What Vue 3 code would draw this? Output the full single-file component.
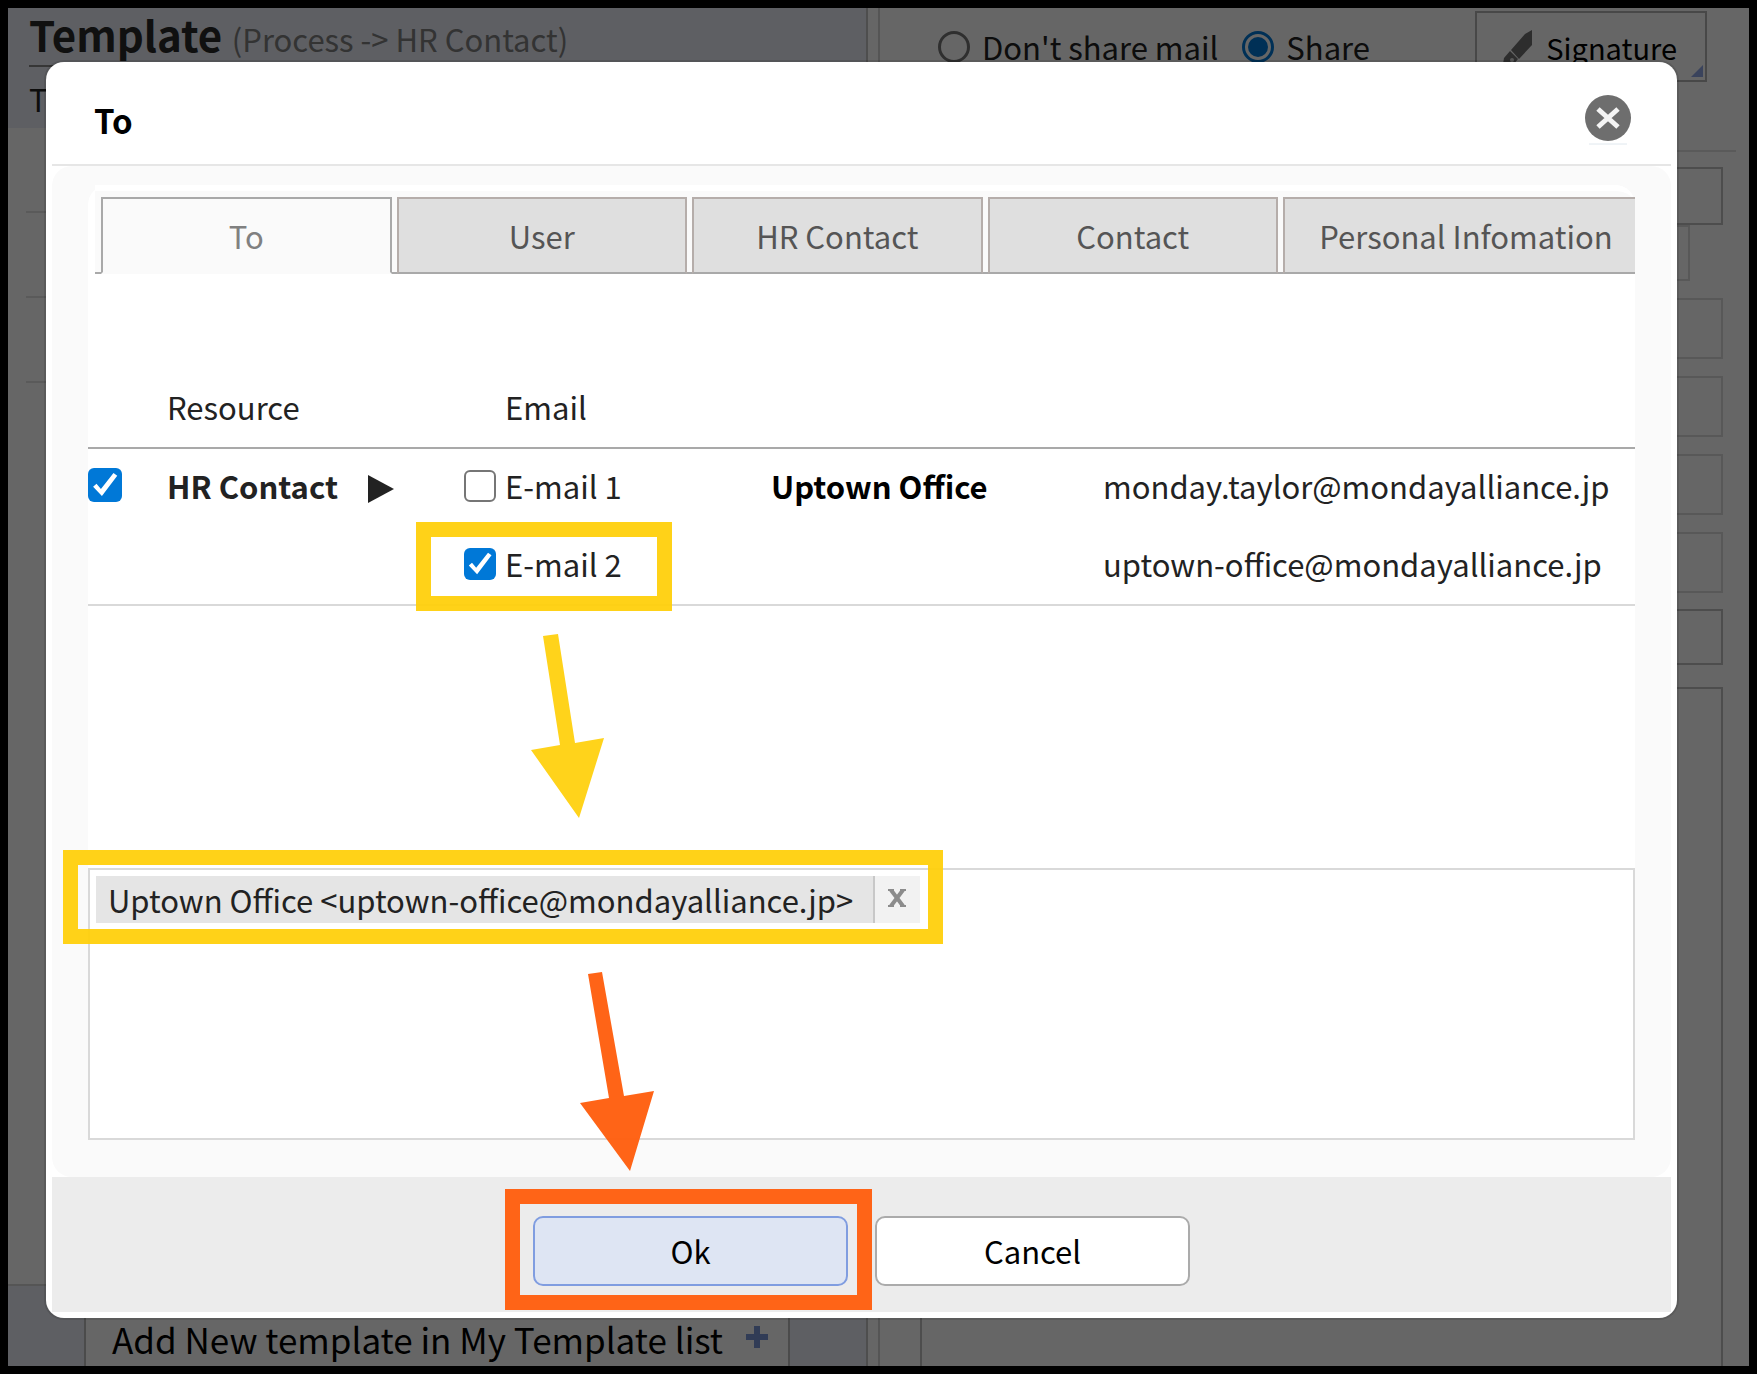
<script setup>
import { ref } from 'vue'

const tabs = ['To', 'User', 'HR Contact', 'Contact', 'Personal Infomation']
const activeTab = ref('To')
const shareMode = ref('share')
const resourceOn = ref(true)
const rows = ref([
  { id: 'email-1', label: 'E-mail 1', address: 'monday.taylor@mondayalliance.jp', checked: false },
  { id: 'email-2', label: 'E-mail 2', address: 'uptown-office@mondayalliance.jp', checked: true },
])
const recipients = ['Uptown Office <uptown-office@mondayalliance.jp>']
const lightFields = ['Cc', 'Bcc', 'Reply', 'From']
</script>

<template>
  <div class="app">
    <div class="page">
      <section class="left">
        <header class="left-head">
          <h1 class="left-title">Template <small>(Process -&gt; HR Contact)</small></h1>
          <p class="left-sub">T</p>
        </header>
        <ul class="left-list">
          <li></li>
          <li></li>
          <li></li>
        </ul>
        <footer class="left-foot">
          <button type="button" class="add">
            Add New template in My Template list
            <svg class="plus" viewBox="0 0 22 22" aria-hidden="true"><path d="M8 0h6v8h8v6h-8v8H8v-8H0V8h8z" /></svg>
          </button>
        </footer>
      </section>
      <section class="right">
        <div class="share-row">
          <label class="share"><input v-model="shareMode" type="radio" name="share" value="none" />Don't share mail</label>
          <label class="share"><input v-model="shareMode" type="radio" name="share" value="share" />Share</label>
          <button type="button" class="signature">
            <svg class="pen" viewBox="0 0 30 34" aria-hidden="true">
              <path d="M29 0v15L16 29l-8-9L22 4z" />
              <path d="M7 21l8 8-4 5H0l1-6z" />
              <circle cx="9" cy="30" r="2" class="nib" />
            </svg>
            Signature
            <svg class="corner" viewBox="0 0 12 12" aria-hidden="true"><path d="M12 0v12H0z" /></svg>
          </button>
        </div>
        <form class="mail-form">
          <input class="field subject" type="text" aria-label="Subject" />
          <input class="field short" type="text" aria-label="Name" />
          <input v-for="f in lightFields" :key="f" class="field light" type="text" :aria-label="f" />
          <input class="field attach" type="text" aria-label="Attachment" />
          <textarea class="field message" aria-label="Message"></textarea>
        </form>
      </section>
    </div>

    <div class="backdrop">
      <div class="dialog" role="dialog" aria-labelledby="dialog-title">
        <header class="dialog-head">
          <h2 id="dialog-title">To</h2>
          <button type="button" class="close" aria-label="Close">
            <svg viewBox="0 0 46 50" aria-hidden="true">
              <circle cx="23" cy="23" r="23" fill="#6e6e6e" />
              <path d="M13 14l20 18M33 14L13 32" stroke="#f4f4f4" stroke-width="5" />
              <path d="M4 49h38" stroke="#e0e8ee" stroke-width="1" />
            </svg>
          </button>
        </header>

        <div class="dialog-body">
          <div class="panel">
            <nav class="tabs" role="tablist">
              <button
                v-for="t in tabs"
                :key="t"
                type="button"
                role="tab"
                class="tab"
                :class="{ active: t === activeTab }"
                :aria-selected="t === activeTab"
                @click="activeTab = t"
              >{{ t }}</button>
            </nav>
            <table class="resources">
              <colgroup>
                <col class="c-check" />
                <col class="c-resource" />
                <col class="c-email" />
                <col class="c-name" />
                <col />
              </colgroup>
              <thead>
                <tr>
                  <th></th>
                  <th>Resource</th>
                  <th class="email-head">Email</th>
                  <th></th>
                  <th></th>
                </tr>
              </thead>
              <tbody>
                <tr v-for="(row, i) in rows" :key="row.id">
                  <td>
                    <input v-if="i === 0" id="hr" v-model="resourceOn" type="checkbox" class="box large" />
                  </td>
                  <td>
                    <label v-if="i === 0" for="hr" class="resource">
                      HR Contact
                      <svg viewBox="0 0 26 34" aria-hidden="true"><path d="M0 6l26 14L0 34z" /></svg>
                    </label>
                  </td>
                  <td>
                    <label class="email">
                      <input v-model="row.checked" type="checkbox" class="box" />{{ row.label }}
                      <span v-if="row.checked" class="mark mark-email"></span>
                    </label>
                  </td>
                  <td class="owner"><template v-if="i === 0">Uptown Office</template></td>
                  <td>{{ row.address }}</td>
                </tr>
              </tbody>
            </table>
            <svg class="arrow arrow-yellow" viewBox="0 0 74 184" aria-hidden="true">
              <path d="M12 2L27 0 44 109 73 104 48 184 0 116 29 111z" />
            </svg>
          </div>

          <div class="selected">
            <div v-for="r in recipients" :key="r" class="chip">
              <span class="chip-text">{{ r }}</span>
              <button type="button" class="chip-x" :aria-label="'Remove ' + r">
                <svg viewBox="0 0 18 18" aria-hidden="true"><path d="M3 1l12 16M15 1L3 17" /><path class="serif" d="M0 1h6M12 1h6M0 17h6M12 17h6" /></svg>
              </button>
              <span class="mark mark-chip"></span>
            </div>
            <svg class="arrow arrow-orange" viewBox="0 0 74 199" aria-hidden="true">
              <path d="M8 2L22 0 44 124 74 119 50 199 0 131 29 126z" />
            </svg>
          </div>
        </div>

        <footer class="dialog-foot">
          <div class="ok-wrap">
            <button type="button" class="btn primary">Ok</button>
            <span class="mark mark-ok"></span>
          </div>
          <button type="button" class="btn">Cancel</button>
        </footer>
      </div>
    </div>
  </div>
</template>

<style>
body {
  margin: 0;
}
</style>

<style scoped>
.app,
.app * {
  box-sizing: border-box;
}
.app {
  position: relative;
  display: flex;
  min-height: 100vh;
  border: 8px solid #000;
  background: #fff;
  color: #222;
  font-family: "Noto Sans CJK JP", "Noto Sans", sans-serif;
  font-size: 31px;
  line-height: 48px;
}
button,
input,
textarea {
  margin: 0;
  padding: 0;
  font: inherit;
  color: #000;
}
h1,
h2,
p,
ul {
  margin: 0;
  padding: 0;
}

/* page behind the dialog */
.page {
  flex: 1;
  display: grid;
  grid-template-columns: 860fr 871fr;
  column-gap: 10px;
}
.left {
  display: flex;
  flex-direction: column;
  border-right: 2px solid #c4c4c4;
}
.left-head {
  height: 120px;
  padding-left: 21px;
  background: #ebeef7;
}
.left-title {
  height: 59px;
  border-bottom: 2px solid #888;
  font-size: 42px;
  line-height: 52px;
  color: #2a2a2a;
}
.left-title small {
  font-size: 31px;
  font-weight: 400;
  color: #808080;
}
.left-sub {
  padding-top: 8px;
}
.left-list {
  flex: 1;
  padding-left: 18px;
  list-style: none;
}
.left-list li {
  height: 85px;
  border-bottom: 2px solid #e2e2e2;
}
.left-foot {
  display: flex;
  height: 82px;
  padding: 0 76px;
  border-top: 2px solid #d5d5d5;
  background: #ebeef7;
}
.add {
  flex: 1;
  display: flex;
  align-items: center;
  gap: 23px;
  padding: 26px 0 0 26px;
  border: solid #bbb;
  border-width: 0 2px;
  background: #fff;
  font-size: 35px;
  white-space: nowrap;
}
.plus {
  width: 22px;
  height: 22px;
  margin-bottom: 4px;
  fill: #7c96d6;
}
.right {
  display: flex;
  flex-direction: column;
  border-left: 2px solid #d5d5d5;
}
.share-row {
  display: flex;
  align-items: center;
  gap: 24px;
  padding: 3px 42px 0 58px;
}
.share {
  display: flex;
  align-items: center;
  gap: 12px;
}
.share input {
  appearance: none;
  width: 32px;
  height: 32px;
  border: 3px solid #767676;
  border-radius: 50%;
  background: #fff;
}
.share input:checked {
  padding: 3px;
  border-color: #0078d7;
}
.share input:checked::before {
  content: "";
  display: block;
  height: 100%;
  border-radius: 50%;
  background: #0078d7;
}
.signature {
  position: relative;
  display: flex;
  align-items: center;
  gap: 13px;
  height: 71px;
  margin-left: auto;
  padding: 0 28px 0 26px;
  border: 2px solid #b4b4b4;
  background: #fff;
  font-size: 29px;
}
.pen {
  width: 30px;
  height: 34px;
  fill: #707070;
}
.nib {
  fill: #ddd;
}
.corner {
  position: absolute;
  right: 2px;
  bottom: 3px;
  width: 12px;
  height: 12px;
  fill: #91a8e6;
}
.mail-form {
  flex: 1;
  display: flex;
  flex-direction: column;
  margin: 68px 13px 0;
  padding: 15px 13px 0 27px;
  border-top: 2px solid #e2e2e2;
}
.field {
  display: block;
  width: 100%;
  border: 2px solid #c0c0c0;
  background: #fff;
}
.subject {
  height: 58px;
}
.short {
  width: calc(100% - 33px);
  height: 56px;
  border-color: #ddd;
}
.light {
  height: 61px;
  margin-top: 17px;
  border-color: #ddd;
}
.attach {
  height: 56px;
  margin-top: 16px;
}
.message {
  flex: 1;
  margin-top: 22px;
  border-bottom: 0;
  resize: none;
}

/* dialog */
.backdrop {
  position: absolute;
  inset: 0;
  display: flex;
  padding: 54px 72px 48px 38px;
  background: rgba(0, 0, 0, 0.6);
}
.dialog {
  flex: 1;
  display: flex;
  flex-direction: column;
  padding: 0 6px 6px;
  border-radius: 18px;
  background: #fff;
  box-shadow: 0 0 0 2px rgba(0, 0, 0, 0.1);
}
.dialog-head {
  display: flex;
  align-items: center;
  justify-content: space-between;
  height: 104px;
  padding: 14px 40px 0 42px;
  border-bottom: 2px solid #e6e6e6;
}
.dialog-head h2 {
  font-size: 33px;
  color: #000;
}
.close {
  width: 46px;
  height: 50px;
  border: 0;
  background: none;
}
.close svg {
  display: block;
}
.dialog-body {
  flex: 1;
  display: flex;
  flex-direction: column;
  padding: 19px 36px 37px;
  border-radius: 20px;
  background: #fafafa;
}
.panel {
  position: relative;
  flex: 1;
  border-radius: 20px 20px 0 0;
  background: #fff;
}
.tabs {
  display: grid;
  grid-template-columns: repeat(4, 1fr) 352px;
  gap: 5px;
  margin: 0 0 0 7px;
  padding: 6px 0 0 6px;
  border-top: 6px solid #fff;
  border-top-right-radius: 20px;
  background: linear-gradient(#a9a9a9, #a9a9a9) bottom / 100% 2px no-repeat #fafafa;
}
.tab {
  height: 77px;
  padding: 1px 0 0;
  border: 2px solid #b5adaa;
  border-bottom-color: #a9a9a9;
  background: #dfdfdf;
  color: #555;
  white-space: nowrap;
}
.tab.active {
  border-color: #a9a9a9;
  border-bottom-color: #fafafa;
  background: #fafafa;
  color: #808080;
}
.tab:last-child {
  padding-left: 12px;
  border-right: 0;
}
.resources {
  width: 100%;
  margin-top: 109px;
  border-collapse: separate;
  border-spacing: 0;
  table-layout: fixed;
}
.c-check {
  width: 79px;
}
.c-resource {
  width: 297px;
}
.c-email {
  width: 307px;
}
.c-name {
  width: 332px;
}
.resources th {
  height: 66px;
  padding: 0 0 16px;
  border-bottom: 2px solid #a9a9a9;
  font-weight: 400;
  text-align: left;
}
.resources th.email-head {
  padding-left: 41px;
}
.resources td {
  height: 78px;
  padding: 13px 0 16px;
  vertical-align: top;
  white-space: nowrap;
}
.resources tbody tr:last-child td {
  border-bottom: 2px solid #d9d9d9;
}
.resource {
  display: flex;
  align-items: center;
  gap: 30px;
  font-weight: 700;
}
.resource svg {
  width: 26px;
  height: 34px;
  fill: #222;
}
.email {
  position: relative;
  display: inline-flex;
  align-items: center;
  gap: 9px;
  vertical-align: top;
}
.owner {
  font-weight: 700;
  color: #000;
}
.box {
  appearance: none;
  display: block;
  width: 32px;
  height: 32px;
  border: 2px solid #767676;
  border-radius: 6px;
  background: #fff;
}
.box.large {
  width: 34px;
  height: 34px;
  margin: 6px 0;
}
.box:checked {
  border: 0;
  background: #0078d7;
}
.box:checked::before {
  content: "";
  display: block;
  height: 100%;
  background: #fff;
  clip-path: polygon(15% 55%, 25% 46%, 38% 62%, 75% 15%, 86% 23%, 41% 82%);
}
.selected {
  position: relative;
  height: 272px;
  padding: 6px;
  border: 2px solid #d9d9d9;
  background: #fff;
}
.chip {
  position: relative;
  display: inline-flex;
  height: 47px;
  vertical-align: top;
}
.chip-text {
  padding: 0 20px 0 12px;
  border-right: 2px solid #c8c8c8;
  background: #e5e5e5;
  white-space: nowrap;
}
.chip-x {
  display: flex;
  align-items: center;
  width: 45px;
  padding: 0 0 4px 13px;
  border: 0;
  background: #f2f2f2;
}
.chip-x svg {
  width: 18px;
  height: 18px;
  fill: none;
  stroke: #8c8c8c;
  stroke-width: 4;
}
.chip-x .serif {
  stroke-width: 2;
}
.dialog-foot {
  display: flex;
  justify-content: center;
  gap: 27px;
  padding: 39px 0 26px;
  background: #ececec;
}
.btn {
  display: block;
  width: 315px;
  height: 70px;
  padding-bottom: 1px;
  border: 2px solid #ababab;
  border-radius: 10px;
  background: #fff;
}
.btn.primary {
  border-color: #809de0;
  background: #dee5f3;
}
.ok-wrap {
  position: relative;
}

/* tutorial marks drawn over the dialog */
.mark {
  position: absolute;
  border: 15px solid rgba(255, 207, 10, 0.94);
  pointer-events: none;
}
.mark-email {
  inset: -18px -50px -23px -48px;
}
.mark-chip {
  inset: -26px -23px -21px -33px;
}
.mark-ok {
  inset: -27px -24px -24px -28px;
  border-color: rgba(255, 94, 14, 0.96);
}
.arrow {
  position: absolute;
  pointer-events: none;
}
.arrow-yellow {
  left: 443px;
  bottom: 50px;
  width: 74px;
  height: 184px;
  fill: #ffd31b;
}
.arrow-orange {
  left: 490px;
  top: 102px;
  width: 74px;
  height: 199px;
  fill: rgba(255, 94, 14, 0.96);
}
</style>
